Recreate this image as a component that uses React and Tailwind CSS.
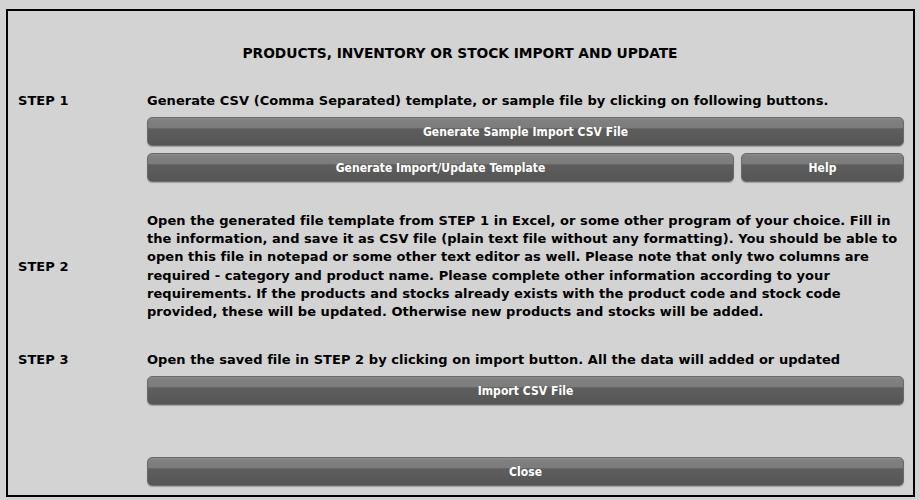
import React from 'react';

const font = { fontFamily: '"DejaVu Sans", sans-serif' };
const btnFont = { fontFamily: '"DejaVu Sans Condensed", "DejaVu Sans", sans-serif' };

const step2Lines = [
  'Open the generated file template from STEP 1 in Excel, or some other program of your choice. Fill in',
  'the information, and save it as CSV file (plain text file without any formatting). You should be able to',
  'open this file in notepad or some other text editor as well. Please note that only two columns are',
  'required - category and product name. Please complete other information according to your',
  'requirements. If the products and stocks already exists with the product code and stock code',
  'provided, these will be updated. Otherwise new products and stocks will be added.',
];

function Btn({ children, className = '' }) {
  return (
    <button
      style={btnFont}
      className={`h-[29px] rounded-[5px] border border-[#6a6a6a] bg-[linear-gradient(to_bottom,#8c8c8c_0%,#808080_8%,#7c7c7c_36%,#5e5e5e_40%,#555555_100%)] text-[12px] font-bold text-white shadow-[0_1px_1px_rgba(0,0,0,0.25)] ${className}`}
    >
      {children}
    </button>
  );
}

export default function App() {
  return (
    <div className="h-[500px] w-[920px] bg-[#d3d3d3] pl-[6px] pr-[5px] pt-[9px] text-black" style={font}>
      <div className="h-[488px] border-2 border-black pr-[9px]">
        <h1 className="pl-[8px] pt-[34px] text-center text-[13.8px] font-bold leading-[16px] tracking-[-0.05px]">
          PRODUCTS, INVENTORY OR STOCK IMPORT AND UPDATE
        </h1>

        <div className="mt-[32px] grid grid-cols-[139px_1fr] text-[13px] font-bold tracking-[0.05px]">
          <div className="pl-[10px] leading-[16px]">STEP 1</div>
          <div>
            <p className="leading-[16px]">
              Generate CSV (Comma Separated) template, or sample file by clicking on following buttons.
            </p>
            <Btn className="mt-[8px] w-full">Generate Sample Import CSV File</Btn>
            <div className="mt-[7px] flex gap-[7px]">
              <Btn className="flex-1">Generate Import/Update Template</Btn>
              <Btn className="w-[163px]">Help</Btn>
            </div>
          </div>

          <div className="mt-[30px] flex items-center pl-[10px]">STEP 2</div>
          <p className="mt-[30px] whitespace-nowrap leading-[18.2px]">
            {step2Lines.map((line, i) => (
              <React.Fragment key={i}>
                {line}
                {i < step2Lines.length - 1 && <br />}
              </React.Fragment>
            ))}
          </p>

          <div className="mt-[31px] pl-[10px] leading-[16px]">STEP 3</div>
          <div className="mt-[31px]">
            <p className="leading-[16px]">
              Open the saved file in STEP 2 by clicking on import button. All the data will added or updated
            </p>
            <Btn className="mt-[8px] w-full">Import CSV File</Btn>
          </div>

          <div />
          <Btn className="mt-[52px] w-full">Close</Btn>
        </div>
      </div>
    </div>
  );
}
